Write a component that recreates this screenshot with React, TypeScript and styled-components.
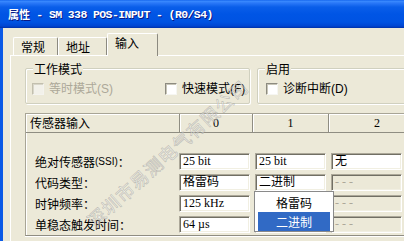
import React from "react";
import styled, { createGlobalStyle } from "styled-components";

const Global = createGlobalStyle`
  html, body { margin: 0; padding: 0; }
  body { background: #ECE9D8; width: 404px; height: 241px; overflow: hidden; }
`;

const CJK = `"Noto Sans CJK SC", sans-serif`;
const UI = `"Liberation Sans", "Noto Sans CJK SC", sans-serif`;
const SERIF = `"Liberation Serif", "Noto Sans CJK SC", serif`;

const Window = styled.div`
  position: relative;
  width: 404px;
  height: 241px;
  overflow: hidden;
  background: #ece9d8;
  display: flex;
  flex-direction: column;
`;

const TitleBar = styled.div`
  height: 28px;
  flex: none;
  box-sizing: border-box;
  padding-left: 8px;
  display: flex;
  align-items: center;
  background: linear-gradient(
    to bottom,
    #0a5ae8 0px,
    #3b8cff 1px,
    #2a78f8 3px,
    #0a5ee9 7px,
    #0055e5 14px,
    #0053e2 22px,
    #0046d2 26px,
    #0031a8 28px
  );
  color: #fff;
  font-family: "Liberation Mono", "Noto Sans CJK SC", monospace;
  font-weight: bold;
  font-size: 11.5px;
  letter-spacing: -0.6px;
  text-shadow: 1px 1px #0a1883;
  white-space: nowrap;
`;

const TitleCJK = styled.span`
  font-family: ${CJK};
  font-size: 11px;
  letter-spacing: 0;
`;

const Frame = styled.div`
  flex: 1;
  display: flex;
  flex-direction: column;
  border-left: 3px solid #0b5ae6;
  padding-top: 5px;
  padding-left: 7px;
`;

const TabStrip = styled.div`
  display: flex;
  align-items: flex-end;
  height: 22px;
  padding-left: 3px;
  position: relative;
  z-index: 1;
`;

const Tab = styled.div<{ $active?: boolean; $w: number }>`
  box-sizing: border-box;
  width: ${(p) => p.$w}px;
  height: ${(p) => (p.$active ? 23 : 18)}px;
  margin-bottom: ${(p) => (p.$active ? -1 : 0)}px;
  padding-left: 7px;
  padding-top: 1px;
  border-top: 1px solid #fff;
  border-left: 1px solid #fff;
  border-right: 1px solid #8c8a80;
  border-radius: 2px 2px 0 0;
  background: #ece9d8;
  font: 12px/15px ${CJK};
  color: #000;
`;

const Panel = styled.div`
  flex: 1;
  border-top: 1px solid #fff;
  border-left: 1px solid #fff;
  padding: 5px 0 0 14px;
  display: flex;
  flex-direction: column;
`;

const GroupRow = styled.div`
  display: flex;
  gap: 7px;
  padding-top: 2px;
`;

const Group = styled.div<{ $w: number }>`
  position: relative;
  flex: none;
  box-sizing: border-box;
  width: ${(p) => p.$w}px;
  height: 36px;
  margin-top: 5px;
  border: 1px solid #d0d0bf;
  box-shadow: inset 1px 1px #fff, 1px 1px #fff;
  border-radius: 2px;
  display: flex;
  align-items: center;
  padding: 6px 0 0 ${(p) => (p.$w > 200 ? 6 : 8)}px;
`;

const Legend = styled.span`
  position: absolute;
  top: -8px;
  left: 7px;
  padding: 0 1px;
  background: #ece9d8;
  font: 12px/15px ${CJK};
  color: #000;
`;

const CheckItem = styled.label<{ $w?: number; $disabled?: boolean }>`
  display: flex;
  align-items: center;
  gap: 5px;
  width: ${(p) => (p.$w ? `${p.$w}px` : "auto")};
  font: 12px/14px ${UI};
  color: ${(p) => (p.$disabled ? "#aca899" : "#000")};
  white-space: nowrap;
`;

const Box = styled.span<{ $disabled?: boolean }>`
  display: inline-block;
  box-sizing: border-box;
  width: 12px;
  height: 12px;
  border: 1px solid;
  border-color: ${(p) => (p.$disabled ? "#c2bfae #f4f3ee #f4f3ee #c2bfae" : "#8d8b80 #f6f6f2 #f6f6f2 #8d8b80")};
  background: ${(p) => (p.$disabled ? "#f2f1ea" : "#fff")};
  box-shadow: inset 1px 1px ${(p) => (p.$disabled ? "#d8d6c9" : "#c8c6b8")};
`;

const Table = styled.div`
  width: 400px;
  margin-top: 9px;
  border-left: 1px solid #a8a596;
  border-top: 1px solid #a8a596;
  border-bottom: 1px solid #8f8d82;
  box-shadow: inset 1px 0 #fff, 0 1px #fff;
  display: flex;
  flex-direction: column;
`;

const HeaderRow = styled.div`
  display: grid;
  grid-template-columns: 154px 73px 76px 1fr;
  height: 18px;
  border-bottom: 1px solid #8f8d82;
`;

const HeaderCell = styled.div<{ $center?: boolean }>`
  box-sizing: border-box;
  border-right: 1px solid #8f8d82;
  box-shadow: inset 1px 1px #fff;
  display: flex;
  align-items: center;
  justify-content: ${(p) => (p.$center ? "center" : "flex-start")};
  padding-left: ${(p) => (p.$center ? 0 : 4)}px;
  font: 12px/16px ${(p) => (p.$center ? SERIF : CJK)};
  color: #000;
`;

const DataGrid = styled.div`
  display: grid;
  grid-template-columns: 153px 76px 76px 76px;
  grid-auto-rows: 17px;
  row-gap: 4px;
  padding: 20px 0 2px 0;
`;

const Label = styled.div`
  display: flex;
  align-items: center;
  padding-left: 9px;
  font: 12px/17px ${CJK};
  color: #000;
  white-space: nowrap;
`;

const Small = styled.span`
  font: 10px ${UI};
`;

const Cell = styled.div`
  position: relative;
`;

const Field = styled.div<{ $disabled?: boolean }>`
  box-sizing: border-box;
  width: 71px;
  height: 17px;
  border: 1px solid;
  border-color: #aca899 #fff #fff #aca899;
  box-shadow: inset 1px 1px #716f64, inset -1px -1px #f1efe2;
  background: ${(p) => (p.$disabled ? "#ece9d8" : "#fff")};
  padding-left: 3px;
  font: 12px/15px ${SERIF};
  color: ${(p) => (p.$disabled ? "#aca899" : "#000")};
  white-space: nowrap;
  overflow: hidden;
`;

const ListBox = styled.div`
  position: absolute;
  top: 17px;
  left: -1px;
  z-index: 3;
  box-sizing: border-box;
  width: 80px;
  height: 41px;
  padding: 1px 3px;
  background: #fff;
  border: 1px solid #8a8a8a;
  display: flex;
  flex-direction: column;
`;

const ListItem = styled.div<{ $selected?: boolean }>`
  height: 19px;
  display: flex;
  align-items: center;
  justify-content: center;
  font: 12px/19px ${CJK};
  background: ${(p) => (p.$selected ? "#316ac5" : "transparent")};
  color: ${(p) => (p.$selected ? "#fff" : "#000")};
`;

const Watermark = styled.div`
  position: absolute;
  left: 167px;
  top: 153px;
  z-index: 5;
  transform: translate(-50%, -50%) rotate(-42deg);
  font: 18px/20px ${CJK};
  letter-spacing: 1px;
  white-space: nowrap;
  color: rgba(255, 255, 255, 0.45);
  -webkit-text-stroke: 0.6px rgba(120, 120, 120, 0.45);
  pointer-events: none;
`;

type Row = {
  label: React.ReactNode;
  cells: { text: string; disabled?: boolean; open?: boolean }[];
};

const rows: Row[] = [
  {
    label: (
      <>
        绝对传感器<Small>(SSI)</Small>：
      </>
    ),
    cells: [{ text: "25 bit" }, { text: "25 bit" }, { text: "无" }],
  },
  {
    label: "代码类型：",
    cells: [{ text: "格雷码" }, { text: "二进制", open: true }, { text: "- - -", disabled: true }],
  },
  {
    label: "时钟频率：",
    cells: [{ text: "125 kHz" }, { text: "" }, { text: "- - -", disabled: true }],
  },
  {
    label: "单稳态触发时间：",
    cells: [{ text: "64 µs" }, { text: "" }, { text: "- - -", disabled: true }],
  },
];

export default function App() {
  return (
    <Window>
      <Global />
      <TitleBar>
        <TitleCJK>属性</TitleCJK>&nbsp;- SM 338 POS-INPUT - (R0/S4)
      </TitleBar>
      <Frame>
        <TabStrip>
          <Tab $w={45}>常规</Tab>
          <Tab $w={49}>地址</Tab>
          <Tab $w={51} $active>
            输入
          </Tab>
        </TabStrip>
        <Panel>
          <GroupRow>
            <Group $w={225}>
              <Legend>工作模式</Legend>
              <CheckItem $w={133} $disabled>
                <Box $disabled />
                等时模式(S)
              </CheckItem>
              <CheckItem>
                <Box />
                快速模式(F)
              </CheckItem>
            </Group>
            <Group $w={170}>
              <Legend>启用</Legend>
              <CheckItem>
                <Box />
                诊断中断(D)
              </CheckItem>
            </Group>
          </GroupRow>
          <Table>
            <HeaderRow>
              <HeaderCell>传感器输入</HeaderCell>
              <HeaderCell $center>0</HeaderCell>
              <HeaderCell $center>1</HeaderCell>
              <HeaderCell $center>2</HeaderCell>
            </HeaderRow>
            <DataGrid>
              {rows.map((r, i) => (
                <React.Fragment key={i}>
                  <Label>{r.label}</Label>
                  {r.cells.map((c, j) => (
                    <Cell key={j}>
                      <Field $disabled={c.disabled}>{c.text}</Field>
                      {c.open && (
                        <ListBox>
                          <ListItem>格雷码</ListItem>
                          <ListItem $selected>二进制</ListItem>
                        </ListBox>
                      )}
                    </Cell>
                  ))}
                </React.Fragment>
              ))}
            </DataGrid>
          </Table>
        </Panel>
      </Frame>
      <Watermark>深圳市易测电气有限公司</Watermark>
    </Window>
  );
}
